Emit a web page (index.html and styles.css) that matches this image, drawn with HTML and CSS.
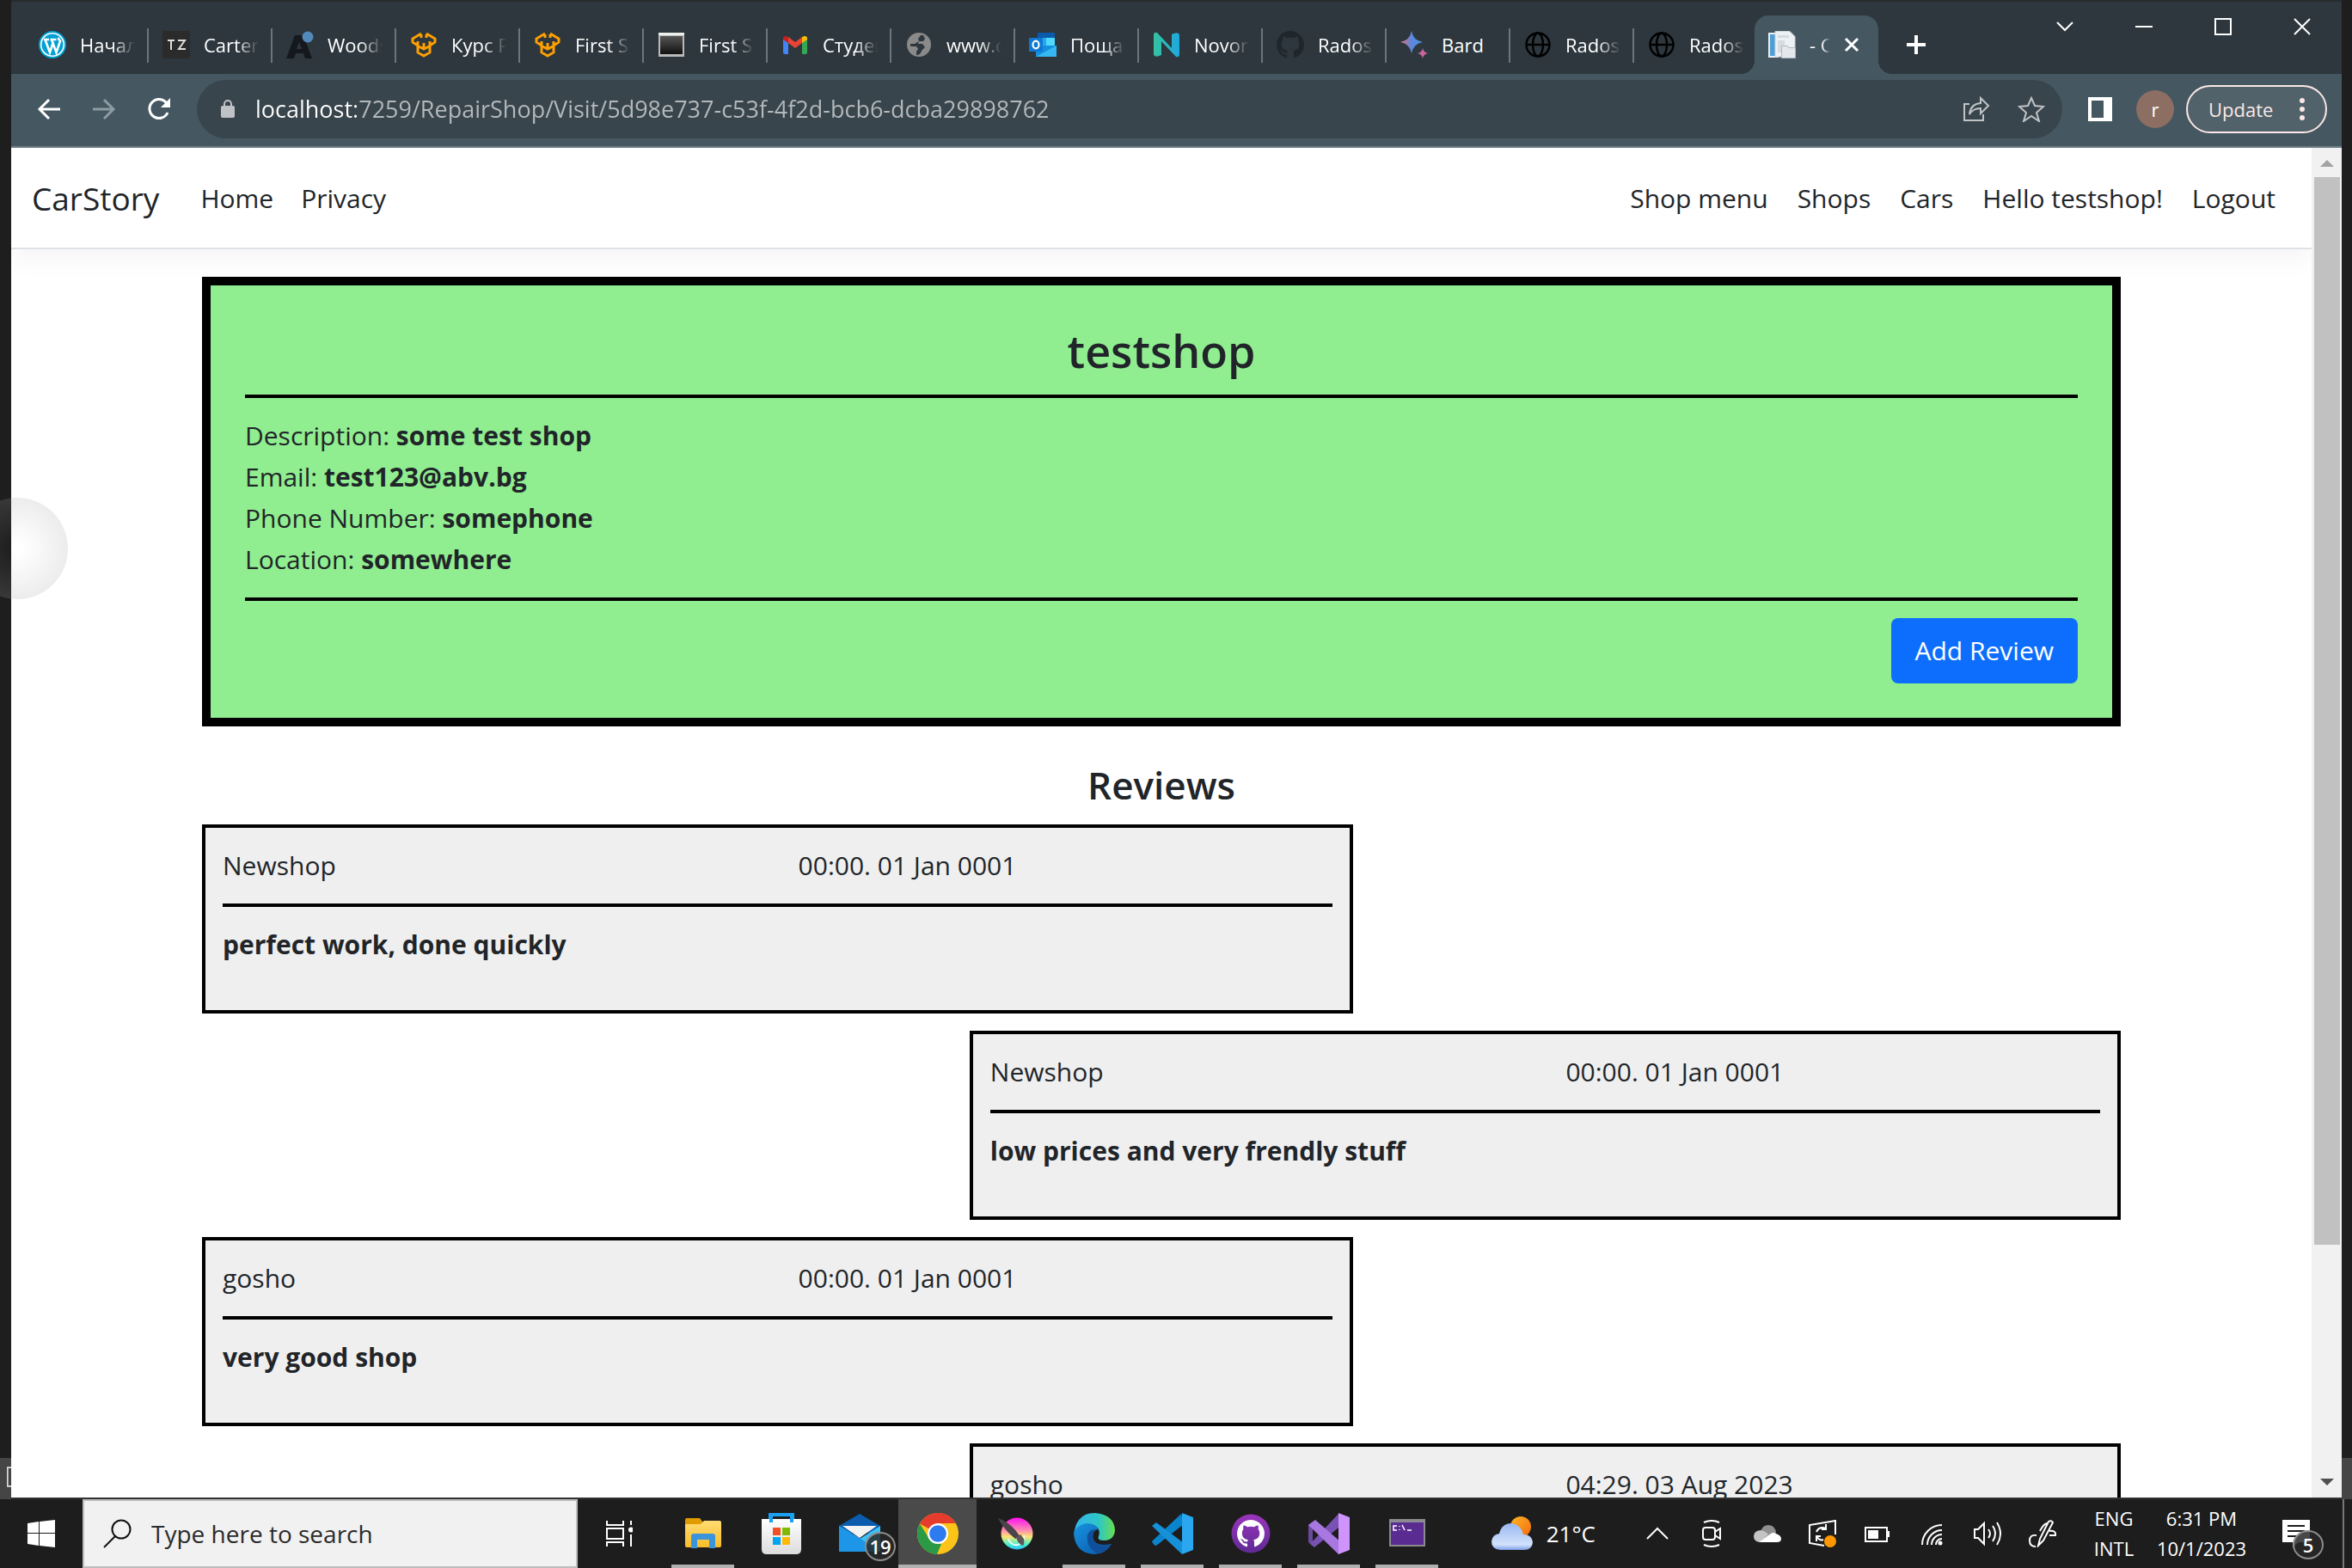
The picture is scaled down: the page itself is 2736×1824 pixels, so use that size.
FILE: index.html
```html
<!DOCTYPE html>
<html lang="en">
<head>
<meta charset="utf-8">
<meta name="viewport" content="width=device-width, initial-scale=1">
<title>- CarStory</title>
<link rel="stylesheet" href="styles.css">
</head>
<body>
<svg class="defs" aria-hidden="true">
  <defs>
    <symbol id="softuni" viewBox="0 0 32 32"><path d="M13 4v4M19 4v4M13 3 3 9v4l6 4v8l7 4 7-4v-8l6-4V9L19 3M9 17V12M23 17V12M10 18l6 3 6-3M16 14v6" fill="none" stroke="#ffa000" stroke-width="3"/></symbol>
    <symbol id="globe" viewBox="0 0 32 32"><g fill="none" stroke="#000" stroke-width="2.4"><circle cx="16" cy="16" r="13.5"/><ellipse cx="16" cy="16" rx="6" ry="13.5"/><path d="M2 16h28" /></g></symbol>
    <symbol id="octocat" viewBox="0 0 16 16"><path d="M8 0C3.58 0 0 3.58 0 8c0 3.54 2.29 6.53 5.47 7.59.4.07.55-.17.55-.38 0-.19-.01-.82-.01-1.49-2.01.37-2.53-.49-2.69-.94-.09-.23-.48-.94-.82-1.13-.28-.15-.68-.52-.01-.53.63-.01 1.08.58 1.23.82.72 1.21 1.87.87 2.33.66.07-.52.28-.87.51-1.07-1.78-.2-3.64-.89-3.64-3.95 0-.87.31-1.59.82-2.15-.08-.2-.36-1.02.08-2.12 0 0 .67-.21 2.2.82.64-.18 1.32-.27 2-.27s1.36.09 2 .27c1.53-1.04 2.2-.82 2.2-.82.44 1.1.16 1.92.08 2.12.51.56.82 1.27.82 2.15 0 3.07-1.87 3.75-3.65 3.95.29.25.54.73.54 1.48 0 1.07-.01 1.93-.01 2.2 0 .21.15.46.55.38A8.01 8.01 0 0 0 16 8c0-4.42-3.58-8-8-8z"/></symbol>
    <linearGradient id="gBard" x1="0" x2="1"><stop offset="0" stop-color="#e8707a"/><stop offset=".5" stop-color="#5b86dc"/><stop offset="1" stop-color="#4a90e2"/></linearGradient>
    <linearGradient id="gN" x1="0" x2="1"><stop offset="0" stop-color="#33c3a0"/><stop offset="1" stop-color="#1fa8e0"/></linearGradient>
    <linearGradient id="gCmd" x1="0" x2="0" y2="1"><stop offset="0" stop-color="#555"/><stop offset="1" stop-color="#111"/></linearGradient>
    <linearGradient id="gFolder" x1="0" x2="0" y2="1"><stop offset="0" stop-color="#ffdc73"/><stop offset="1" stop-color="#f8bd28"/></linearGradient>
    <linearGradient id="gStore" x1="0" x2="0" y2="1"><stop offset="0" stop-color="#fff"/><stop offset="1" stop-color="#dcdcdc"/></linearGradient>
    <linearGradient id="gEdge" x1="0" x2="1"><stop offset="0" stop-color="#32b4ee"/><stop offset=".6" stop-color="#2fc6c6"/><stop offset="1" stop-color="#66e04f"/></linearGradient>
    <linearGradient id="gEdgeB" x1="0" x2="1" y2="1"><stop offset="0" stop-color="#1795e0"/><stop offset="1" stop-color="#0a55a8"/></linearGradient>
    <linearGradient id="gKrita" x1="0" x2="0" y2="1"><stop offset="0" stop-color="#ff10f0"/><stop offset=".4" stop-color="#ff8fb0"/><stop offset=".6" stop-color="#ffe470"/><stop offset=".85" stop-color="#40f0d0"/><stop offset="1" stop-color="#30b8ff"/></linearGradient>
    <linearGradient id="gHub" x1="0" x2="0" y2="1"><stop offset="0" stop-color="#9a35bd"/><stop offset="1" stop-color="#5f2a93"/></linearGradient>
    <linearGradient id="gSun" x1="0" x2="1" y2="1"><stop offset="0" stop-color="#ffb524"/><stop offset="1" stop-color="#f26a10"/></linearGradient>
    <linearGradient id="gCloud" x1="0" x2="0" y2="1"><stop offset="0" stop-color="#9ab8f2"/><stop offset=".8" stop-color="#d2e2fb"/><stop offset="1" stop-color="#7d9fe8"/></linearGradient>
  </defs>
</svg>

<main class="stage">
  <section class="window">
    <header class="tabstrip">
      <nav class="tabs" aria-label="Tabs">
        <button class="tab"><svg viewBox="0 0 32 32"><circle cx="16" cy="16" r="16" fill="#00a0d2"/><circle cx="16" cy="16" r="13.3" fill="none" stroke="#fff" stroke-width="1.6"/><path d="M6 10h6M13.500 10h7M7.500 10l5.500 15 4-12M15 10l5.500 15 4.500-13-2.500-4" fill="none" stroke="#fff" stroke-width="2.600"/></svg><span>Начало</span></button>
        <button class="tab"><svg viewBox="0 0 32 32"><path fill="#2b2b2b" d="M0 0h32v32H0z"/><path d="M6 11h8M10 11v11M18 11h8l-7 10h8" fill="none" stroke="#ddd" stroke-width="2"/></svg><span>Carter</span></button>
        <button class="tab"><svg viewBox="0 0 32 32"><path fill="#15191d" d="M10 5h10l10 27h-8l-2-6h-9l-2 6H0zM15 13l-3 8h6z"/><circle cx="25" cy="7" r="6.500" fill="#5189bb"/></svg><span>Woods</span></button>
        <button class="tab"><svg><use href="#softuni"/></svg><span>Курс P</span></button>
        <button class="tab"><svg><use href="#softuni"/></svg><span>First St</span></button>
        <button class="tab"><svg viewBox="0 0 32 32"><path fill="#b9b9b9" d="M1 2h30v28H1z"/><path fill="url(#gCmd)" d="M3 6h26v21H3z"/><path fill="#eee" d="M1 2h30v3H1z"/></svg><span>First St</span></button>
        <button class="tab"><svg viewBox="0 0 32 32"><path fill="#4285f4" d="M2 9l6 5v13H4q-2 0-2-2z"/><path fill="#34a853" d="M24 14l6-5v16q0 2-2 2h-4z"/><path fill="#ea4335" d="M8 7l8 6 8-6v7l-8 6-8-6z"/><path fill="#c5221f" d="M2 9q0-5 6-2v7l-6-4z"/><path fill="#fbbc04" d="M24 7q6-3 6 2v1l-6 4z"/></svg><span>Студен</span></button>
        <button class="tab"><svg viewBox="0 0 32 32"><circle cx="16" cy="16" r="14" fill="#8a8a8a"/><path d="M18 5l-3 4 1 3-5 3H6q-1 2 1 3h6l2 3-2 3v4q5 0 6-5l4-4-3-4h-5l1-3h5l2-3-2-4z" fill="#2d373d"/></svg><span>www.ca</span></button>
        <button class="tab"><svg viewBox="0 0 32 32"><path fill="#0a5cab" d="M10 2h20v6H10z"/><path fill="#28a8ea" d="M10 8h10v10H10z"/><path fill="#50d9ff" d="M20 8h10v10H20z"/><path fill="#1490df" d="M8 17h24v13H8z"/><path fill="#35b8f1" d="M8 30l24-13v13z"/><path fill="#0f78d4" d="M0 8h16v16H0z"/><ellipse cx="8" cy="16" rx="3.500" ry="4.300" fill="none" stroke="#fff" stroke-width="2.200"/></svg><span>Поща</span></button>
        <button class="tab"><svg viewBox="0 0 32 32"><path fill="url(#gN)" d="M1 5q0-4 4-3l17 18V4q8-4 9 1v22q0 4-4 3L10 12v16q-8 4-9-1z"/></svg><span>Novor</span></button>
        <button class="tab"><svg fill="#20272c"><use href="#octocat"/></svg><span>Rados</span></button>
        <button class="tab"><svg viewBox="0 0 32 32"><path fill="url(#gBard)" d="M13 0q2 11 13 13-11 2-13 13Q11 15 0 13 11 11 13 0z"/><path fill="#c766a0" d="M26 20q1 5 6 6-5 1-6 6-1-5-6-6 5-1 6-6z"/></svg><span class="whole">Bard</span></button>
        <button class="tab"><svg><use href="#globe"/></svg><span>Rados</span></button>
        <button class="tab tab-last"><svg><use href="#globe"/></svg><span>Rados</span></button>
        <button class="tab tab-active"><svg viewBox="0 0 32 32"><path fill="#e9eff4" d="M0 2h12v29H0z"/><path fill="#4f9fd6" d="M2 4h6v25H2z"/><path fill="#eef1f4" stroke="#cfd5da" d="M8 .5h17l6 6V30H8z"/><path fill="#d5dbe0" d="M11 5h13v3H11zM11 11h8v14h-8z"/><path fill="#e4e7ec" stroke="#b4b9c0" d="M15.500 17.500h7l1 2h8v12h-16z"/></svg><span class="short">- Car</span><svg class="tab-close" viewBox="0 0 18 18"><path d="M2 2l14 14M16 2 2 16"/></svg></button>
      </nav>
      <button class="newtab" aria-label="New tab"><svg viewBox="0 0 24 24"><path d="M12 1v22M1 12h22"/></svg></button>
      <div class="winbtns">
        <button aria-label="Search tabs"><svg viewBox="0 0 20 20"><path d="M1 5l9 9 9-9"/></svg></button>
        <button aria-label="Minimize"><svg viewBox="0 0 20 20"><path d="M0 10h20"/></svg></button>
        <button aria-label="Maximize"><svg viewBox="0 0 20 20"><path d="M1 1h18v18H1z"/></svg></button>
        <button aria-label="Close"><svg viewBox="0 0 20 20"><path d="M1 1l18 18M19 1 1 19"/></svg></button>
      </div>
    </header>

    <div class="toolbar">
      <button class="tool" aria-label="Back"><svg viewBox="0 0 28 28"><path d="M27 14H3M14 3 3 14l11 11"/></svg></button>
      <button class="tool tool-off" aria-label="Forward"><svg viewBox="0 0 28 28"><path d="M1 14h24M14 3l11 11-11 11"/></svg></button>
      <button class="tool" aria-label="Reload"><svg viewBox="0 0 28 28"><path d="M24 18a11 11 0 1 1-2-12l3 3"/><path d="M27 1v11H16z" fill="#fff" stroke="none"/></svg></button>
      <div class="omnibox">
        <svg class="lock" viewBox="0 0 16 22"><rect y="7" width="16" height="14" rx="2" fill="#bfc3c6"/><path d="M4 8V5a4 4 0 0 1 8 0v3" fill="none" stroke="#bfc3c6" stroke-width="2"/></svg>
        <input class="url" type="text" aria-label="Address" value="localhost:7259/RepairShop/Visit/5d98e737-c53f-4f2d-bcb6-dcba29898762">
        <button class="omni-btn" aria-label="Share"><svg viewBox="0 0 32 30"><path d="M8 9H2v19h22v-7M8 21q1-12 13-13V2l9 9-9 9v-6q-9 0-13 7z"/></svg></button>
        <button class="omni-btn" aria-label="Bookmark"><svg viewBox="0 0 32 30"><path d="M16 2l4 9 10 1-8 7 3 10-9-6-9 6 3-10-8-7 10-1z"/></svg></button>
      </div>
      <button class="panel" aria-label="Side panel"><svg viewBox="0 0 28 28"><path fill="#fff" fill-rule="evenodd" d="M0 0h28v28H0zM4 4v20h14V4z"/></svg></button>
      <button class="avatar">r</button>
      <button class="update">Update<svg viewBox="0 0 6 26"><circle cx="3" cy="3" r="3"/><circle cx="3" cy="13" r="3"/><circle cx="3" cy="23" r="3"/></svg></button>
    </div>

    <div class="viewport">
      <div class="page">
        <nav class="navbar">
          <a class="brand" href="#">CarStory</a>
          <a href="#">Home</a>
          <a href="#">Privacy</a>
          <div class="nav-right">
            <a href="#">Shop menu</a>
            <a href="#">Shops</a>
            <a href="#">Cars</a>
            <a href="#">Hello testshop!</a>
            <button class="logout">Logout</button>
          </div>
        </nav>
        <div class="container">
          <section class="shop">
            <h1>testshop</h1>
            <hr>
            <p>Description: <b>some test shop</b></p>
            <p>Email: <b>test123@abv.bg</b></p>
            <p>Phone Number: <b>somephone</b></p>
            <p>Location: <b>somewhere</b></p>
            <hr>
            <div class="actions"><button class="btn">Add Review</button></div>
          </section>
          <h2>Reviews</h2>
          <div class="reviews">
            <article class="review">
              <div class="meta"><span>Newshop</span><span>00:00. 01 Jan 0001</span></div>
              <hr>
              <p>perfect work, done quickly</p>
            </article>
            <article class="review review-right">
              <div class="meta"><span>Newshop</span><span>00:00. 01 Jan 0001</span></div>
              <hr>
              <p>low prices and very frendly stuff</p>
            </article>
            <article class="review">
              <div class="meta"><span>gosho</span><span>00:00. 01 Jan 0001</span></div>
              <hr>
              <p>very good shop</p>
            </article>
            <article class="review review-right">
              <div class="meta"><span>gosho</span><span>04:29. 03 Aug 2023</span></div>
            </article>
          </div>
        </div>
      </div>
      <div class="scrollbar">
        <svg viewBox="0 0 16 8"><path d="M8 0l8 8H0z" fill="#a3a3a3"/></svg>
        <div class="thumb"></div>
        <svg viewBox="0 0 16 8"><path d="M0 0h16L8 8z" fill="#505050"/></svg>
      </div>
    </div>
  </section>
  <svg class="peek" viewBox="0 0 6 28"><path d="M6 1H1v26h5"/></svg>
  <div class="touch"></div>
</main>

<footer class="taskbar">
  <button class="start" aria-label="Start"><svg viewBox="0 0 32 32"><path fill="#fff" d="M0 4l13-2v13H0zM14 2l18-2v15H14zM0 16h13v14L0 28zM14 16h18v16l-18-2z"/></svg></button>
  <label class="search">
    <svg viewBox="0 0 34 34"><circle cx="21" cy="12" r="10.500"/><path d="M14 20 1 33"/></svg>
    <input type="search" placeholder="Type here to search" aria-label="Search">
  </label>
  <button class="start" aria-label="Task view"><svg viewBox="0 0 32 32" fill="none" stroke="#fff" stroke-width="2"><path d="M2 1v5h19V1M2 31v-5h19v5M2 10h19v12H2zM30 1v5M30 17v14"/><circle cx="30" cy="11.500" r="2" fill="#fff"/></svg></button>
  <div class="apps">
    <button class="app running" aria-label="File Explorer"><svg viewBox="0 0 48 48"><path fill="#e09b00" d="M3 8q0-2 2-2h15l4 5v4H3z"/><path fill="url(#gFolder)" d="M3 13h18l4-4h18q2 0 2 2v27q0 2-2 2H5q-2 0-2-2z"/><path fill="#3a94dc" d="M10 41V27q0-3 3-3h22q3 0 3 3v14h-7V31H17v10z"/></svg></button>
    <button class="app" aria-label="Store"><svg viewBox="0 0 48 48"><path d="M11 12V2h26v10" fill="none" stroke="#1ba1f2" stroke-width="4"/><path fill="url(#gStore)" d="M1 7h46v35q0 6-6 6H7q-6 0-6-6z"/><path d="M12 11V2M36 11V2" stroke="#1ba1f2" stroke-width="4"/><path fill="#f25022" d="M14 17h9v9h-9z"/><path fill="#7fba00" d="M25 17h9v9h-9z"/><path fill="#00a4ef" d="M14 28h9v9h-9z"/><path fill="#ffb900" d="M25 28h9v9h-9z"/></svg></button>
    <button class="app" aria-label="Mail"><svg viewBox="0 0 48 48"><path fill="#0b5cad" d="M0 15 24 1l24 14v8H0z"/><path fill="#1e96e8" d="M0 15l48 30H0z"/><path fill="#3cc0f7" d="M48 15v30H24L0 45z"/><path fill="#1e96e8" d="M0 15l24 14 22 16H0z"/><path fill="#f3f3f3" d="M4 15h40L24 29z"/></svg><span class="badge">19</span></button>
    <button class="app current" aria-label="Chrome"><svg viewBox="0 0 48 48"><circle cx="24" cy="24" r="24" fill="#fcc419"/><path fill="#e63c2e" d="M24 24 3 12.500A24 24 0 0 1 45 12H24z"/><path fill="#2b9a46" d="M3 12.500 14 30l14 6-5 12A24 24 0 0 1 3 12.500z"/><circle cx="24" cy="24" r="12" fill="#fff"/><circle cx="24" cy="24" r="9.800" fill="#2e7bf0"/></svg></button>
    <button class="app" aria-label="Krita"><svg viewBox="0 0 48 48"><circle cx="25" cy="24" r="18.500" fill="url(#gKrita)"/><path d="M15 30a9 9 0 1 0 18-4" fill="none" stroke="#e9fbff" stroke-width="2"/><path fill="#4b4449" d="M3 6q12 4 21 15l5 7-6 2Q10 20 3 6z"/><path fill="#5c565a" d="M24 28l5-3 4 5q1 6-1 8-6-2-8-10z"/></svg></button>
    <button class="app running" aria-label="Edge"><svg viewBox="0 0 48 48"><path fill="url(#gEdgeB)" d="M0 24Q2 10 14 11q12 1 14 8-6 1-6 9 2 12 22 8-7 12-20 12Q2 47 0 24z"/><path fill="#10509a" d="M16 26q-2 14 12 21 10-1 16-11-16 5-21-5-2-7 3-12-8 0-10 7z"/><path fill="url(#gEdge)" d="M1 20Q5 0 25 0q22 2 23 20-1 12-13 12-8 0-6-5 3-8-5-13-12-6-23 6z"/></svg></button>
    <button class="app running" aria-label="Visual Studio Code"><svg viewBox="0 0 48 48"><path fill="#0a84cc" d="M0 33 34 1l3 12L5 38q-3 0-5-5z"/><path fill="#1691d8" d="M0 15l5-4 32 24-2 13z"/><path fill="#2aa7f0" d="M35 0l13 5v38l-13 5z"/></svg></button>
    <button class="app running" aria-label="GitHub Desktop"><svg viewBox="0 0 48 48"><circle cx="24" cy="24" r="22.500" fill="url(#gHub)"/><use href="#octocat" x="8" y="8" width="32" height="32" fill="#fff"/></svg></button>
    <button class="app running" aria-label="Visual Studio"><svg viewBox="0 0 48 48"><path fill="#6b4a9e" d="M0 14l5-4v28l-5-4z"/><path fill="#7a52b5" d="M2 36 35 1v16L7 40z"/><path fill="#a877e0" d="M0 14 8 8l30 26-3 14z"/><path fill="#cf94fb" d="M35 0l13 5v38l-13 5z"/></svg></button>
    <button class="app running" aria-label="Command Prompt"><svg viewBox="0 0 48 48"><path fill="#8a8a90" d="M3 7h42v32H3z"/><path fill="#5a2b91" d="M5 11h38v26H5z"/><path d="M12 15H8v5h4M15 15v1M15 19v1M18 14l3 6M24 20h5" fill="none" stroke="#fff" stroke-width="1.500"/></svg></button>
  </div>
  <div class="tray">
    <button class="weather"><svg viewBox="0 0 48 42"><circle cx="34" cy="13" r="12" fill="url(#gSun)"/><path fill="url(#gCloud)" d="M10 40Q0 39 0 30q1-8 9-9 3-12 14-12 11 1 14 13 10 0 11 9-1 9-10 9z"/></svg>21°C</button>
    <button class="ico" aria-label="Show hidden icons"><svg viewBox="0 0 32 32"><path d="M4 22 16 10l12 12"/></svg></button>
    <button class="ico" aria-label="Meet now"><svg viewBox="0 0 32 32"><rect x="5" y="9" width="14" height="14" rx="3"/><path d="M19 14l6-4v12l-6-4M6 3q9-4 18 0M6 29q9 4 18 0"/></svg></button>
    <button class="ico" aria-label="OneDrive"><svg viewBox="0 0 32 32"><path fill="#8f8f8f" stroke="none" d="M8 14q2-8 9-8t9 8l-4 10H8z"/><path fill="#c4c4c4" stroke="none" d="M7 26q-7-1-7-7t8-7q6 1 9 5z"/><path fill="#fff" stroke="none" d="M6 26 20 16q3-2 6 0 6 2 6 6t-5 4z"/></svg></button>
    <button class="ico" aria-label="Windows Update"><svg viewBox="0 0 32 32"><path d="M31 17V1L1 6v21l17 3M20 10q-8-3-11 4M20 5v6h-5M9 25v-6h5M9 19q4 6 8 4"/><circle cx="25" cy="25" r="7" fill="#ff9800" stroke="none"/></svg></button>
    <button class="ico" aria-label="Battery"><svg viewBox="0 0 32 32"><path d="M2 9h25v16H2zM29 13v7"/><path fill="#fff" stroke="none" d="M5 12h12v10H5z"/></svg></button>
    <button class="ico" aria-label="Wi-Fi"><svg viewBox="0 0 32 32"><path d="M4 29A23 23 0 0 1 27 6M10 29a17 17 0 0 1 17-17M15 29a12 12 0 0 1 12-12M20 29a7 7 0 0 1 7-7"/><circle cx="25" cy="27" r="2.500" fill="#fff" stroke="none"/></svg></button>
    <button class="ico" aria-label="Volume"><svg viewBox="0 0 32 32"><path d="M1 11h4l7-7v24l-7-7H1zM17 11q4 5 0 10M22 7q6 9 0 18M27 3q8 13 0 26"/></svg></button>
    <button class="ico" aria-label="Ink workspace"><svg viewBox="0 0 32 32"><path d="M11 30l2-8L23 2q3-2 5 1L17 24zM21 4q-4 1-8 9M9 18q-8-1-8 6t7 7M24 13q8-1 7 5h-7"/></svg></button>
    <button class="stack lang"><span>ENG</span><span>INTL</span></button>
    <button class="stack clock"><span>6:31 PM</span><span>10/1/2023</span></button>
    <button class="note" aria-label="Notifications"><svg viewBox="0 0 32 32"><path fill="#fff" d="M0 0h32v26H19l-7 6v-6H0z"/><path d="M6 7h20M6 13h20M6 19h12" stroke="#1e1e1e" stroke-width="2"/></svg><span class="badge">5</span></button>
  </div>
</footer>
</body>
</html>
```

FILE: styles.css
```css
* { box-sizing: border-box; }

body {
  margin: 0;
  height: 100vh;
  display: flex;
  flex-direction: column;
  overflow: hidden;
  background: #1d1d1d;
  color: #212529;
  font-family: "Open Sans", "Noto Sans", sans-serif;
  font-size: 30px;
  line-height: 48px;
}

button, input {
  margin: 0;
  padding: 0;
  border: 0;
  background: none;
  color: inherit;
  font: inherit;
}

a { color: inherit; text-decoration: none; }
p { margin: 0; }
svg { display: block; flex: none; }
.defs { position: absolute; width: 0; height: 0; }

/* Desktop behind the browser window */
.stage {
  position: relative;
  flex: 1;
  min-height: 0;
  display: flex;
  padding: 0 12px 0 13px;
  background: linear-gradient(to top, #454545 48px, #1e1e1e 48px);
}

.peek {
  position: absolute;
  left: 8px;
  bottom: 12px;
  width: 5px;
  height: 28px;
  fill: none;
  stroke: #ddd;
  stroke-width: 2;
}

.touch {
  position: absolute;
  left: -39px;
  top: 579px;
  width: 118px;
  height: 118px;
  border-radius: 50%;
  background: radial-gradient(circle closest-side, rgba(160, 160, 160, 0) 10%, rgba(160, 160, 160, .2) 100%);
}

.window {
  flex: 1;
  min-width: 0;
  display: flex;
  flex-direction: column;
  border-top: 2px solid #262b2c;
  border-bottom: 2px solid #333;
  overflow: hidden;
}

/* Tab strip */
.tabstrip {
  flex: none;
  display: flex;
  height: 84px;
  padding-left: 16px;
  background: #2d373d;
  color: #fff;
}

.tabs { display: flex; padding-top: 16px; }

.tab {
  position: relative;
  width: 144px;
  height: 68px;
  padding-left: 16px;
  display: flex;
  align-items: center;
  gap: 16px;
  font-size: 22px;
  text-align: left;
}

.tab::after {
  content: "";
  position: absolute;
  right: 0;
  top: 15px;
  width: 2px;
  height: 40px;
  background: #6c757a;
}

.tab svg { width: 32px; height: 32px; }

.tab span {
  width: 64px;
  overflow: hidden;
  white-space: nowrap;
  -webkit-mask-image: linear-gradient(to right, #000 60%, transparent);
  mask-image: linear-gradient(to right, #000 60%, transparent);
}

.tab .whole { -webkit-mask-image: none; mask-image: none; }

.tab-last { width: 140px; }
.tab-last::after, .tab-active::after { display: none; }

.tab-active {
  border-radius: 16px 16px 0 0;
  background: #455761;
}

.tab-active::before {
  content: "";
  position: absolute;
  left: -16px;
  right: -16px;
  bottom: 0;
  height: 16px;
  background:
    radial-gradient(circle at 0 0, transparent 16px, #455761 16px) left / 16px 16px no-repeat,
    radial-gradient(circle at 100% 0, transparent 16px, #455761 16px) right / 16px 16px no-repeat;
}

.tab .short { width: 24px; }
.tab .tab-close { width: 18px; height: 18px; stroke: #fff; stroke-width: 3; }

.newtab { margin-left: 32px; padding-top: 16px; }
.newtab svg { width: 24px; height: 24px; stroke: #fff; stroke-width: 4; }

.winbtns { display: flex; margin-left: auto; }
.winbtns button {
  width: 92px;
  height: 58px;
  display: flex;
  align-items: center;
  justify-content: center;
}
.winbtns svg { width: 20px; height: 20px; fill: none; stroke: #fff; stroke-width: 2; }

/* Toolbar */
.toolbar {
  flex: none;
  display: flex;
  align-items: center;
  height: 86px;
  padding: 0 17px 2px 12px;
  border-bottom: 2px solid #6f7e87;
  background: #455761;
  color: #fff;
}

.tool { width: 64px; display: flex; justify-content: center; }
.tool svg { width: 28px; height: 28px; fill: none; stroke: #fff; stroke-width: 3; }
.tool-off svg { stroke: #8f9ba2; }

.omnibox {
  flex: 1;
  display: flex;
  align-items: center;
  height: 68px;
  margin-left: 12px;
  padding: 0 4px 0 28px;
  border-radius: 34px;
  background: #39454c;
}

.lock { width: 16px; height: 22px; }

.url {
  flex: 1;
  min-width: 0;
  height: 48px;
  margin-left: 24px;
  font-size: 27px;
  color: transparent;
  background: linear-gradient(to right, #fff 118px, #b4b9bc 118px);
  -webkit-background-clip: text;
  background-clip: text;
}

.omni-btn { width: 64px; }
.omni-btn svg { width: 32px; height: 30px; margin-left: 16px; fill: none; stroke: #bfc3c6; stroke-width: 2; }

.panel { margin-left: 30px; }
.panel svg { width: 28px; height: 28px; }

.avatar {
  width: 44px;
  height: 44px;
  margin-left: 28px;
  border-radius: 50%;
  background: #8d6e63;
  font-size: 22px;
  line-height: 40px;
}

.update {
  display: flex;
  align-items: center;
  justify-content: space-between;
  width: 164px;
  height: 56px;
  margin-left: 14px;
  padding: 0 24px;
  border: 2px solid #fce8e6;
  border-radius: 28px;
  background: #51626b;
  color: #fce8e6;
  font-size: 22px;
}
.update svg { width: 6px; height: 26px; fill: #fce8e6; }

/* Web page */
.viewport { flex: 1; min-height: 0; display: flex; background: #fff; }
.page { flex: 1; min-width: 0; overflow: hidden; }

.navbar {
  display: flex;
  align-items: center;
  gap: 32px;
  height: 118px;
  padding: 2px 42px 0 24px;
  border-bottom: 2px solid #dee2e6;
  box-shadow: 0 8px 32px rgba(0, 0, 0, .05);
}

.brand { margin-right: 16px; font-size: 37px; }
.nav-right { display: flex; gap: 34px; margin-left: auto; }

.container { max-width: 2232px; margin: 32px auto 0; }

.shop {
  padding: 40px;
  border: 10px solid #000;
  background: #90ee90;
}

h1, h2 { margin: 0; font-weight: 600; text-align: center; }
h1 { padding-top: 4px; font-size: 52px; line-height: 63px; }
h2 { margin: 39px 0 16px; font-size: 44px; line-height: 59px; }

hr { height: 4px; margin: 20px 0; border: 0; background: #000; }

.actions { display: flex; justify-content: flex-end; }
.btn {
  height: 76px;
  padding: 0 28px;
  border-radius: 8px;
  background: #0d6efd;
  color: #fff;
}

.reviews { display: flex; flex-direction: column; gap: 20px; }
.review {
  width: 60%;
  min-height: 220px;
  padding: 20px;
  border: 4px solid #000;
  background: #efefef;
}
.review-right { align-self: flex-end; }
.review p { font-weight: 700; }
.meta { display: grid; grid-template-columns: 1fr 1fr; gap: 48px; }

.scrollbar {
  width: 35px;
  display: flex;
  flex-direction: column;
  align-items: center;
  padding: 14px 3px;
  background: #f1f1f1;
}
.scrollbar svg { width: 16px; height: 8px; }
.scrollbar svg:last-child { margin-top: auto; }
.thumb { width: 30px; height: calc(80% + 8px); margin-top: 12px; background: #c1c1c1; }

/* Taskbar */
.taskbar { flex: none; display: flex; height: 80px; background: #1d1d1d; color: #fff; }
.taskbar button { position: relative; display: flex; align-items: center; justify-content: center; }
.start { width: 96px; }
.start svg { width: 32px; height: 32px; }

.search {
  display: flex;
  align-items: center;
  width: 576px;
  padding: 0 22px;
  gap: 22px;
  border: 2px solid #bdbdbd;
  background: #f1f1f1;
}
.search svg { width: 34px; height: 34px; fill: none; stroke: #111; stroke-width: 2; }
.search input { flex: 1; min-width: 0; font-size: 28px; color: #2b2b2b; }
.search input::placeholder { color: #2b2b2b; opacity: 1; }

.apps { display: flex; padding-left: 4px; }
.app { width: 91px; }
.app svg { width: 48px; height: 48px; }
.running::after, .current::after {
  content: "";
  position: absolute;
  left: 9px;
  right: 9px;
  bottom: 0;
  height: 4px;
  background: #b0b0b0;
}
.current { background: #4a4a4a; }
.current::after { left: 0; right: 0; }

.badge {
  position: absolute;
  left: 52px;
  top: 38px;
  width: 36px;
  height: 34px;
  border: 2px solid #8c8c8c;
  border-radius: 50%;
  background: rgba(40, 40, 40, .85);
  font-size: 22px;
  font-weight: 600;
  line-height: 30px;
  text-align: center;
}

.tray { display: flex; margin-left: auto; padding-right: 9px; }
.weather { gap: 16px; margin-right: 40px; font-size: 26px; }
.weather svg { width: 48px; height: 42px; }
.ico { width: 64px; }
.ico svg { width: 32px; height: 32px; fill: none; stroke: #fff; stroke-width: 2; }
.taskbar .stack { flex-direction: column; font-size: 22px; line-height: 35px; }
.lang { width: 84px; margin-left: 9px; }
.clock { width: 120px; }
.taskbar .note { width: 106px; padding-right: 4px; border-right: 2px solid #777; }
.note svg { width: 32px; height: 32px; }
.note .badge { left: 46px; top: 36px; }
```
